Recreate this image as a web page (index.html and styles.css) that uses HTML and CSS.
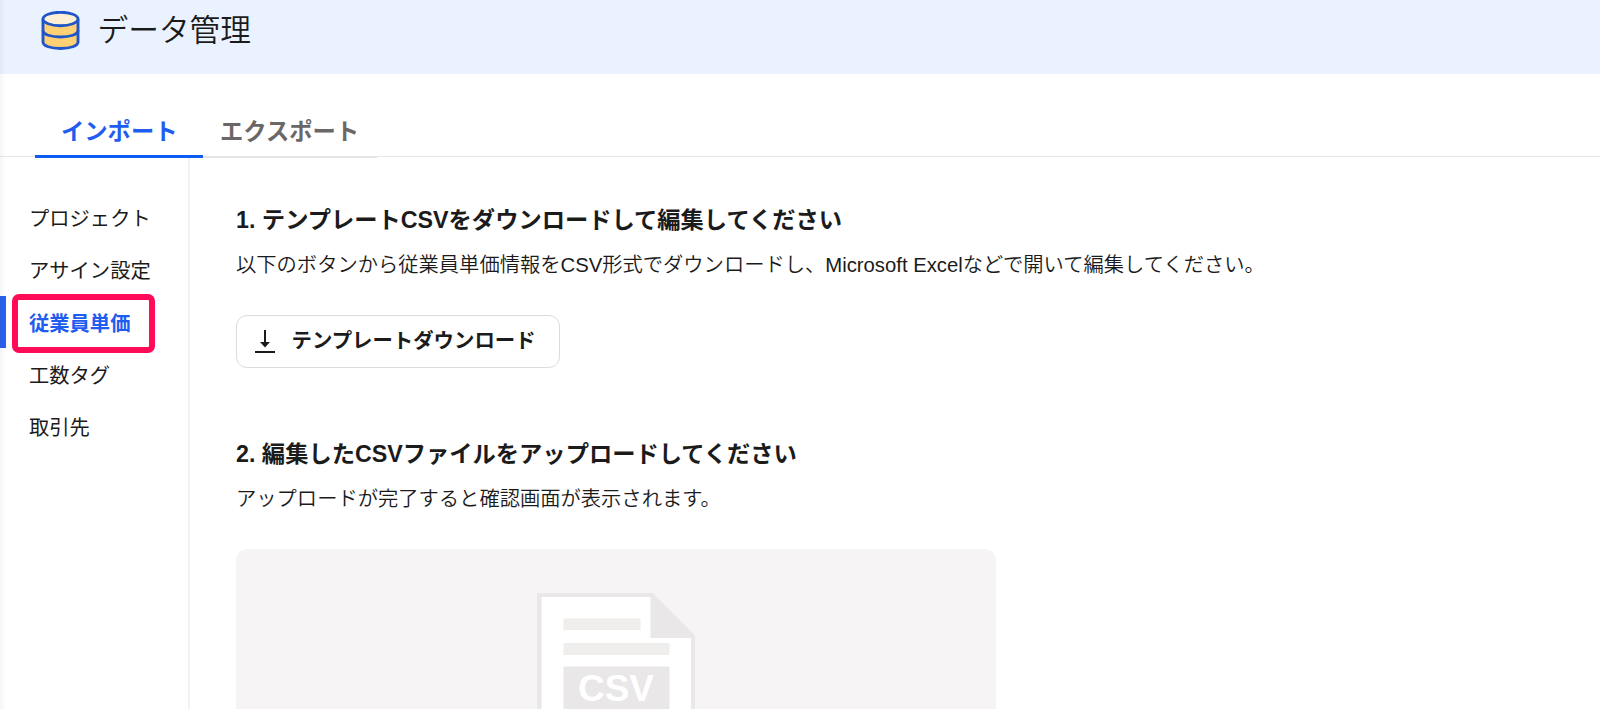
FILE: index.html
```
<!DOCTYPE html>
<html lang="ja">
<head>
	<meta charset="UTF-8">
	<title>データ管理</title>
	<link rel="stylesheet" href="styles.css">
</head>
<body>
	<div class="header">
		<svg class="logo" width="40" height="40" viewBox="0 0 40 40">
			<path d="M2 8v23c0 4 8 6.500 17.500 6.500s17.500-2.500 17.500-6.500V8" fill="#ffd074" stroke="#1f57c9" stroke-width="2.900"/>
			<ellipse cx="19.500" cy="8" rx="17.500" ry="6.700" fill="#fff0d5" stroke="#1f57c9" stroke-width="2.900"/>
			<path d="M2 19.500c0 4 8 6.500 17.500 6.500s17.500-2.500 17.500-6.500" fill="none" stroke="#1f57c9" stroke-width="2.900"/>
		</svg>
		<h1>データ管理</h1>
	</div>
	<ul class="tabs">
		<li class="active">インポート</li>
		<li>エクスポート</li>
	</ul>
	<div class="main">
		<ul class="side">
			<li>プロジェクト</li>
			<li>アサイン設定</li>
			<li class="active">従業員単価<span class="mark"></span></li>
			<li>工数タグ</li>
			<li>取引先</li>
		</ul>
		<div class="content">
			<div class="step">
				<h2>1. テンプレートCSVをダウンロードして編集してください</h2>
				<p>以下のボタンから従業員単価情報をCSV形式でダウンロードし、Microsoft Excelなどで開いて編集してください。</p>
				<button class="download" type="button">
					<svg width="20" height="24" viewBox="0 0 20 24">
						<path d="M10 0v13" stroke="#1b1b1b" stroke-width="2"/>
						<path d="M5 12h10L10 17.500z" fill="#1b1b1b"/>
						<path d="M0 22h20" stroke="#1b1b1b" stroke-width="2"/>
					</svg>
					<span>テンプレートダウンロード</span>
				</button>
			</div>
			<div class="step">
				<h2>2. 編集したCSVファイルをアップロードしてください</h2>
				<p>アップロードが完了すると確認画面が表示されます。</p>
				<div class="upload">
					<svg width="158" height="116" viewBox="0 0 158 116">
						<path d="M0 0h115.500L158 42.500V116H0z" fill="#e9e7e8"/>
						<path d="M4.500 4H113.500v41H154v71H4.500z" fill="#fff"/>
						<path d="M26.500 25.500h77v11.500h-77zM26.500 50h106v12h-106z" fill="#efeeec"/>
						<path d="M26.500 73.500h106v43h-106z" fill="#e9e7e8"/>
						<text x="79" y="108" textLength="76" lengthAdjust="spacingAndGlyphs" class="csv">CSV</text>
					</svg>
				</div>
			</div>
		</div>
	</div>
	<div class="shade"></div>
</body>
</html>
```

FILE: styles.css
```
*{
	padding: 0;
	margin: 0;
	box-sizing: border-box;
}
body{
	height: 709px;
	overflow: hidden;
	background: #fff;
	color: #1b1b1b;
	font-family: "Liberation Sans", "Noto Sans CJK JP", sans-serif;
	font-size: 20.3px;
}
ul{
	list-style: none;
}
.header{
	height: 74px;
	padding: 0 0 12px 41px;
	display: flex;
	align-items: center;
	background: #ebf2ff;
}
.header h1{
	margin: -1px 0 0 16.5px;
	font-size: 30.7px;
	font-weight: 350;
	line-height: 40px;
}
.tabs{
	height: 83px;
	padding: 30px 0 0 35px;
	display: flex;
	border-bottom: 1px solid #e6e6e6;
}
.tabs li{
	width: 174px;
	height: 54px;
	line-height: 56px;
	font-size: 23.3px;
	font-weight: bold;
	color: #6b6767;
	padding-left: 17px;
	border-bottom: 2px solid #e6e4e4;
}
.tabs .active{
	position: relative;
	z-index: 1;
	width: 168px;
	padding-left: 26px;
	color: #1f5cf0;
	border-bottom: 3px solid #0c5bf2;
}
.main{
	display: flex;
	height: 552px;
}
.side{
	width: 190px;
	padding-top: 34px;
	border-right: 2px solid #f2f2f2;
}
.side li{
	height: 52.3px;
	line-height: 56px;
	padding-left: 29px;
}
.side .active{
	position: relative;
	padding-left: 23px;
	border-left: 6px solid #2a62ee;
	color: #1f5cf0;
	font-weight: bold;
}
/* red frame around the selected item */
.mark{
	position: absolute;
	left: 6px;
	top: -2px;
	width: 142.5px;
	height: 59px;
	border: 6px solid #ff0b58;
	border-radius: 7px;
}
.content{
	flex: 1;
	padding: 46px 0 0 46px;
}
.step{
	height: 234px;
}
.step h2{
	height: 34px;
	line-height: 34px;
	font-size: 23.27px;
	white-space: nowrap;
}
.step p{
	height: 30px;
	margin-top: 12px;
	line-height: 32px;
	font-size: 20.3px;
	font-weight: 350;
	white-space: nowrap;
}
.download{
	width: 324px;
	height: 53px;
	margin-top: 36px;
	padding: 0 0 0 17.5px;
	display: flex;
	align-items: center;
	border: 1px solid #dcdcdc;
	border-radius: 11px;
	background: #fff;
	color: #1b1b1b;
	font: bold 20.4px "Liberation Sans", "Noto Sans CJK JP", sans-serif;
}
.download span{
	margin: -6px 0 0 17px;
}
.upload{
	width: 760px;
	height: 161px;
	margin-top: 36px;
	padding: 44px 0 0 301px;
	border-radius: 12px 12px 0 0;
	background: #f6f4f5;
}
.upload svg{
	display: block;
}
.csv{
	font-size: 36px;
	font-weight: bold;
	text-anchor: middle;
	fill: #fff;
}
.shade{
	position: absolute;
	left: 0;
	top: 0;
	width: 6px;
	height: 709px;
	background: linear-gradient(to right, rgba(0,0,0,.04), rgba(0,0,0,0));
}
```
